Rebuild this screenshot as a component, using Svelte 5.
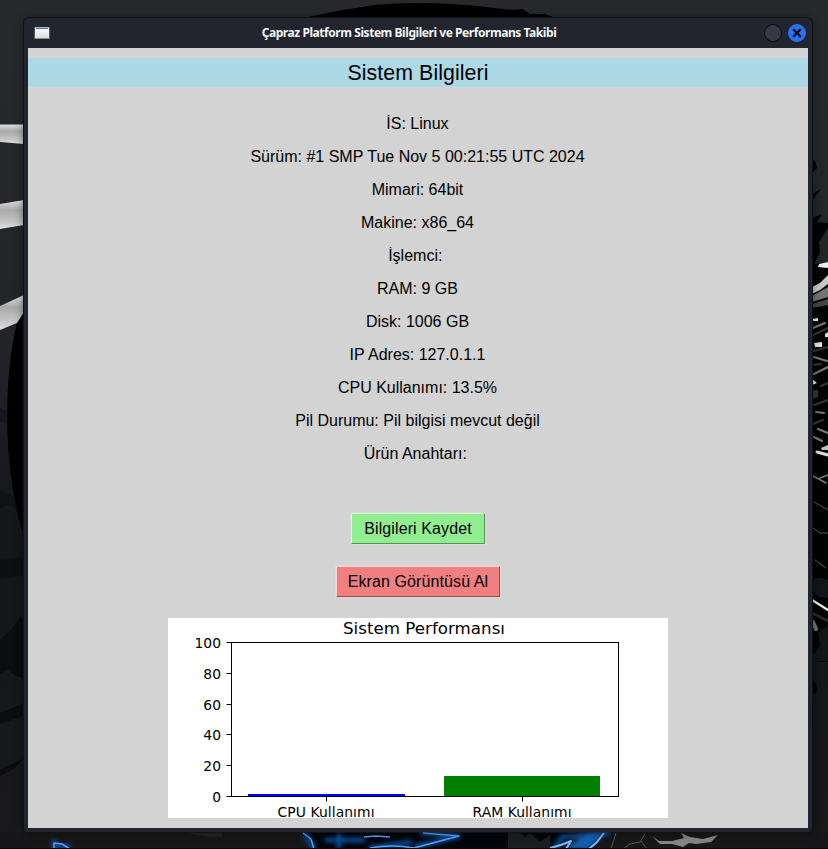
<script>
  const info = [
    'İS: Linux',
    'Sürüm: #1 SMP Tue Nov 5 00:21:55 UTC 2024',
    'Mimari: 64bit',
    'Makine: x86_64',
    'İşlemci: ',
    'RAM: 9 GB',
    'Disk: 1006 GB',
    'IP Adres: 127.0.1.1',
    'CPU Kullanımı: 13.5%',
    'Pil Durumu: Pil bilgisi mevcut değil',
    'Ürün Anahtarı: '
  ];
  const ticks = [
    { v: 0, y: 178.5 },
    { v: 20, y: 147.5 },
    { v: 40, y: 116.5 },
    { v: 60, y: 86.5 },
    { v: 80, y: 55.5 },
    { v: 100, y: 24.5 }
  ];
</script>

<div class="desktop">
  <svg class="wallpaper" width="828" height="849" viewBox="0 0 828 849" aria-hidden="true">
    <defs>
      <linearGradient id="night" x1="0" y1="0" x2="0" y2="1">
        <stop offset="0" stop-color="#28292c" />
        <stop offset=".4" stop-color="#222428" />
        <stop offset=".62" stop-color="#14161a" />
        <stop offset="1" stop-color="#19191a" />
      </linearGradient>
      <linearGradient id="silver" x1="0" y1="0" x2="0" y2="1">
        <stop offset="0" stop-color="#dedede" />
        <stop offset=".35" stop-color="#a9a9a9" />
        <stop offset=".8" stop-color="#c9c9c9" />
        <stop offset="1" stop-color="#e2e2e2" />
      </linearGradient>
      <filter id="soft" x="-30%" y="-80%" width="160%" height="260%" color-interpolation-filters="sRGB"><feGaussianBlur stdDeviation="2.2" /></filter>
      <filter id="fine" color-interpolation-filters="sRGB"><feGaussianBlur stdDeviation=".6" /></filter>
    </defs>
    <rect width="828" height="849" fill="url(#night)" />
    <path d="M305 18 Q335 11 350 9 L374 5 Q430 0 494 8 L512 10 L522 9 L530 14 L545 14 L555 18Z" fill="#000" />
    <path d="M0 124.500L24 124.500V144L0 142Z" fill="url(#silver)" />
    <path d="M0 204L24 200V225L0 229Z" fill="url(#silver)" />
    <path d="M0 306L24 295V320L0 330Z" fill="url(#silver)" />
    <path d="M24 312L17 323C5 370 5 440 12 482Q16 515 24 535Z" fill="#000" />
    <g fill="#0a0c0e" filter="url(#fine)">
      <path d="M0 408L8 411V424L0 421Z" opacity=".35" />
      <path d="M0 490L14 496L18 510L8 505L0 508Z" opacity=".5" />
      <path d="M0 560L24 557V575L0 579Z" opacity=".6" />
      <path d="M0 640L12 629L20 617L24 620V678L16 676L7 669L0 674Z" />
      <path d="M0 713L24 703V716L0 724Z" />
      <path d="M0 770L24 758L15 768L0 776Z" />
    </g>
    <!-- splinters on the right -->
    <path d="M812 160L815 161L817 168L812 173ZM812 194L821 189L812 201ZM812 218L822 214L817 222L828 223V662L812 661Z" fill="#020303" />
    <path d="M828 228L819 242L820 252L814 264L828 262Z" fill="#22252a" />
    <g filter="url(#fine)">
      <path d="M828 262L819 264L818 267L828 268Z" fill="#eee" />
      <path d="M812 287L820 283L828 275V284L820 290L812 294Z" fill="#c8c8c8" />
      <path d="M812 296L828 287V297L812 302Z" fill="#757575" />
      <path d="M812 304L828 299V305L812 308Z" fill="#444" />
      <path d="M814 343L822 342V347L815 347Z" fill="#e4e4e4" />
      <path d="M825 334L828 332V337L825 337Z" fill="#ddd" />
      <path d="M812 319L818 318V321L812 321ZM812 379L817 383L812 385Z" fill="#eee" />
      <path d="M812 390H818V397L812 399Z" fill="#333" />
      <path d="M821 448L828 445V450L822 450Z" fill="#c0c0c0" />
    </g>
    <g fill="none" stroke-linecap="round" filter="url(#fine)">
      <path d="M813 328L825 323M814 357L827 361M814 374L828 367M816 412L824 413M818 429L828 433M814 437L822 441" stroke="#777" stroke-width="2" />
      <path d="M813 335L828 328M814 351L828 347M812 365L821 364M814 405L828 400M813 424L823 420M821 386L828 383" stroke="#343434" stroke-width="2" />
      <path d="M817 452L828 455" stroke="#ddd" stroke-width="3" />
      <path d="M813 476L826 483M820 478L828 475" stroke="#777" stroke-width="1.500" />
      <path d="M814 502L828 510M813 528L820 533L828 533M815 560L826 568" stroke="#555" stroke-width="1" />
      <path d="M812 600L828 610" stroke="#eee" stroke-width="2.200" />
      <path d="M813 622L816 629" stroke="#777" stroke-width="4" />
      <path d="M812 613L828 621" stroke="#26282b" stroke-width="3" />
    </g>
    <path d="M812 580Q819 575 828 580V598L820 597L812 592ZM828 625L818 633L820 646L812 656V661H828Z" fill="#121519" />
    <path d="M812 679L817 686L816 694L812 692Z" fill="#000" />
    <!-- blue streaks under the window -->
    <path d="M0 833H828V849H0Z" fill="#171719" />
    <path d="M300 833H580L548 849H315Z" fill="#02060c" />
    <path d="M186 833H222V837Q201 837 186 833Z" fill="#242424" />
    <g filter="url(#soft)" fill="none">
      <path d="M54 840V849M56 846H70M304 833L315 849M325 840H365M339 833V849M369 848L412 842M414 847L460 836L420 833M555 849L562 837L610 833" stroke="#0958ae" stroke-width="4" />
      <path d="M565 849L589 832L605 833L588 849Z" fill="#1560b5" />
    </g>
    <g fill="none" stroke-linejoin="round" filter="url(#fine)">
      <path d="M54 849V843L62 844L70 849M303 833L311 839L314 849M364 837L376 836L390 837M370 848Q392 844 414 848L459 836L423 833" stroke="#5f9cf1" stroke-width="1.500" />
      <path d="M546 849L561 845L571 841L566 849M589 849L597 842L604 833" stroke="#77b7ff" stroke-width="2" />
      <path d="M616 833L611 849M645 834L640 842L630 844L623 849M641 841L647 849" stroke="#54585d" stroke-width="1" />
    </g>
    <path d="M652 836L659 841L672 841L684 838L681 833L690 837L703 839L718 835L711 842L696 844L689 843L683 847L672 844L660 844Z" fill="#858585" filter="url(#fine)" />
    <path d="M508 849V833H520L525 837L530 833L540 842L550 835V849Z" fill="#1b1d20" />
    <path d="M0 848.500H828" stroke="#080607" />
  </svg>

  <main class="window">
    <header class="titlebar">
      <svg width="16" height="14" viewBox="0 0 16 14" aria-hidden="true">
        <defs><linearGradient id="page" x1="0" y1="0" x2="0" y2="1"><stop stop-color="#fff" /><stop offset="1" stop-color="#dcdedb" /></linearGradient></defs>
        <rect x=".5" y="1" width="15" height="12" fill="#8d908c" />
        <rect x="1" y="1" width="14" height="11" fill="url(#page)" />
        <path d="M1 1.500H15" stroke="#a8bdd8" /><path d="M2 2.500H14" stroke="#4474af" />
      </svg>
      <h1><span>Çapraz Platform Sistem Bilgileri ve Performans Takibi</span></h1>
      <svg width="44" height="20" viewBox="0 0 44 20" aria-hidden="true">
        <circle cx="10" cy="10" r="8.500" fill="#353945" stroke="#090a0e" />
        <circle cx="34" cy="10" r="9" fill="#2672f4" />
        <path d="M31 7L37 13M37 7L31 13" stroke="#080b12" stroke-width="2.300" stroke-linecap="square" />
      </svg>
    </header>
    <section class="content">
      <h2>Sistem Bilgileri</h2>
      <div class="info">
        {#each info as line}<p>{line}</p>{/each}
      </div>
      <button class="save">Bilgileri Kaydet</button>
      <button class="shot">Ekran Görüntüsü Al</button>
      <svg class="chart" width="500" height="200" viewBox="0 0 500 200">
        <rect width="500" height="200" fill="#fff" />
        <text x="256" y="16" text-anchor="middle" font-size="16.667" textLength="162">Sistem Performansı</text>
        <rect x="80" y="176" width="157" height="3" fill="#00f" />
        <rect x="276" y="158" width="156" height="21" fill="#008000" />
        <rect x="63.500" y="24.500" width="387" height="154" fill="none" stroke="#000" />
        {#each ticks as t}
          <path d="M58.500 {t.y}H63" stroke="#000" />
          <text x="53" y={t.y + 5.5} text-anchor="end">{t.v}</text>
        {/each}
        <path d="M158.500 179V183.500M354.500 179V183.500" stroke="#000" />
        <text x="158" y="199" text-anchor="middle" textLength="97">CPU Kullanımı</text>
        <text x="354" y="199" text-anchor="middle" textLength="99">RAM Kullanımı</text>
      </svg>
    </section>
  </main>
</div>

<style>
  :global(body) { margin: 0; overflow: hidden; background: #19191a; }
  .desktop { position: relative; width: 828px; height: 849px; box-sizing: border-box; padding: 17px 15px 17px 23px; overflow: hidden; }
  .wallpaper { position: absolute; left: 0; top: 0; }
  .window {
    position: relative; box-sizing: border-box; width: 790px; height: 815px;
    padding: 0 4px 3px; background: #23252e; border: 1px solid #111218; border-bottom-color: #23252e;
    border-radius: 6px 6px 4px 4px; box-shadow: 0 1px 8px rgba(0, 0, 0, .45);
  }
  .titlebar { height: 30px; box-sizing: border-box; display: flex; align-items: center; padding: 0 1px 0 6px; }
  h1 { flex: 1; margin: 0; padding-left: 5px; text-align: center; color: #f4f4f5; font: 700 12px/30px "Noto Sans", sans-serif; white-space: nowrap; }
  h1 span { letter-spacing: -.44px; }
  .content {
    width: 780px; height: 780px; box-sizing: border-box; padding-top: 10px; background: #d3d3d3; color: #000;
    display: flex; flex-direction: column; align-items: center; font-family: "Liberation Sans", Arial, sans-serif;
  }
  h2 { width: 100%; height: 29px; margin: 0 0 20px; background: #add8e6; text-align: center; font-size: 21.333px; font-weight: 400; line-height: 30px; letter-spacing: .08px; }
  .info { width: 100%; margin-bottom: 43px; }
  p { height: 33px; margin: 0 1px 0 0; font-size: 16px; line-height: 33px; white-space: pre; text-align: center; }
  button {
    box-sizing: border-box; padding: 0; font: 16px/29px "Liberation Sans", Arial, sans-serif; color: #000;
    letter-spacing: .1px; border: 1px solid; border-radius: 0; outline: 1px solid #d9d9d9; height: 31px;
  }
  .save { width: 134px; margin-bottom: 22px; background: #90ee90; border-color: #d8fad8 #569056 #569056 #d8fad8; }
  .shot { width: 164px; margin-bottom: 21px; background: #f08080; border-color: #fad2d2 #904d4d #904d4d #fad2d2; }
  .chart { display: block; flex: none; font: 13.889px "DejaVu Sans", sans-serif; fill: #000; }
</style>
